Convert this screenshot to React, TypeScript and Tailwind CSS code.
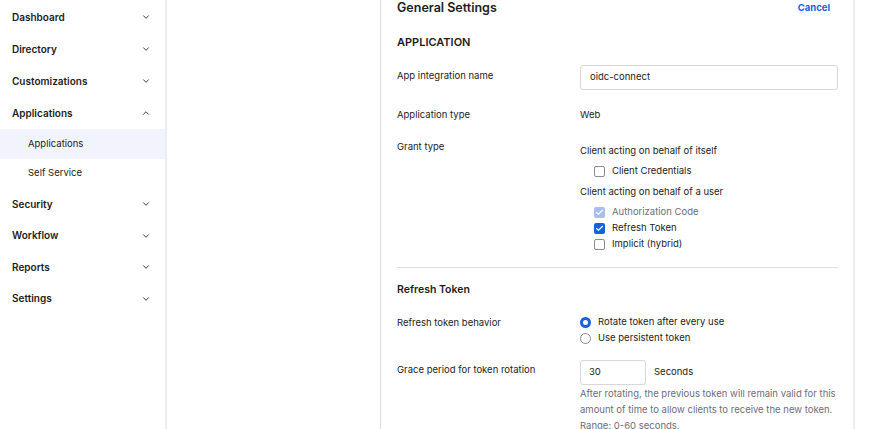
import { ChevronDown, ChevronUp, Check } from 'lucide-react';

const navTop = ['Dashboard', 'Directory', 'Customizations'];
const navBottom = ['Security', 'Workflow', 'Reports', 'Settings'];

function NavRow({ label, open }: { label: string; open?: boolean }) {
    return (
        <div className="flex h-8 items-center justify-between pl-3 pr-[14px] text-[10px] font-semibold text-[#1d1d21]">
            <span>{label}</span>
            {open ? (
                <ChevronUp size={10} strokeWidth={2.25} className="text-[#2f2f36]" />
            ) : (
                <ChevronDown size={10} strokeWidth={2.25} className="text-[#2f2f36]" />
            )}
        </div>
    );
}

function Checkbox({ label, state }: { label: string; state: 'off' | 'on' | 'disabled' }) {
    return (
        <div className="flex h-4 items-center gap-[7px]">
            {state === 'off' ? (
                <span className="h-[11px] w-[11px] rounded-[2px] border border-[#8c8c96] bg-white" />
            ) : (
                <span
                    className={`flex h-[11px] w-[11px] items-center justify-center rounded-[2px] ${state === 'on' ? 'bg-[#1662dd]' : 'bg-[#a9bff0]'}`}
                >
                    <Check size={9} strokeWidth={3} className="text-white" />
                </span>
            )}
            <span className={state === 'disabled' ? 'text-[#6e6e78]' : 'text-[#1d1d21]'}>{label}</span>
        </div>
    );
}

function Radio({ label, checked }: { label: string; checked?: boolean }) {
    return (
        <div className="flex h-4 items-center gap-[7px]">
            {checked ? (
                <span className="h-[11px] w-[11px] rounded-full border-[3px] border-[#1662dd] bg-white" />
            ) : (
                <span className="h-[11px] w-[11px] rounded-full border border-[#8c8c96] bg-white" />
            )}
            <span>{label}</span>
        </div>
    );
}

export default function App() {
    return (
        <div className="flex h-[429px] w-[880px] overflow-hidden bg-white font-['Inter',sans-serif] text-[9.5px] text-[#1d1d21]">
            {/* sidebar */}
            <aside className="w-[167px] shrink-0 border-r-2 border-[#ececef] pt-[1px]">
                {navTop.map((n) => (
                    <NavRow key={n} label={n} />
                ))}
                <NavRow label="Applications" open />
                <div className="flex h-[29.5px] items-center bg-[#f1f4fd] pl-7 text-[9.5px]">Applications</div>
                <div className="flex h-[29.5px] items-center pl-7 text-[9.5px]">Self Service</div>
                {navBottom.map((n) => (
                    <div key={n} className="h-[31.5px]">
                        <NavRow label={n} />
                    </div>
                ))}
            </aside>

            {/* main */}
            <main className="min-w-0 flex-1 pl-[213px] pr-[25px]">
                <div className="h-full border-x border-l-[#dcdcdf] border-r-2 border-r-[#ececef] pl-[16px] pr-[15px]">
                    <div className="flex h-[16px] items-center justify-between">
                        <h2 className="text-[12.5px] font-semibold">General Settings</h2>
                        <button type="button" className="mr-2 text-[9.5px] font-bold text-[#1662dd]">
                            Cancel
                        </button>
                    </div>

                    <h3 className="mt-[18px] text-[11px] font-semibold uppercase">Application</h3>

                    <div className="mt-[14px] flex">
                        <div className="w-[183px] pt-[4px]">App integration name</div>
                        <div className="flex h-[25px] flex-1 items-center rounded-[3px] border border-[#d7d7dc] px-[9px]">
                            oidc-connect
                        </div>
                    </div>

                    <div className="mt-[18px] flex">
                        <div className="w-[183px]">Application type</div>
                        <div>Web</div>
                    </div>

                    <div className="mt-[18px] flex">
                        <div className="w-[183px]">Grant type</div>
                        <div className="flex flex-col pt-[4px]">
                            <div>Client acting on behalf of itself</div>
                            <div className="mt-[5px] pl-[14px]">
                                <Checkbox label="Client Credentials" state="off" />
                            </div>
                            <div className="mt-[6px]">Client acting on behalf of a user</div>
                            <div className="mt-[5px] flex flex-col pl-[14px]">
                                <Checkbox label="Authorization Code" state="disabled" />
                                <Checkbox label="Refresh Token" state="on" />
                                <Checkbox label="Implicit (hybrid)" state="off" />
                            </div>
                        </div>
                    </div>

                    <div className="mt-[15px] border-t border-[#e1e1e4]" />

                    <h3 className="mt-[14px] text-[10.5px] font-semibold">Refresh Token</h3>

                    <div className="mt-[18px] flex">
                        <div className="w-[183px]">Refresh token behavior</div>
                        <div className="-mt-[2px] flex flex-col">
                            <Radio label="Rotate token after every use" checked />
                            <Radio label="Use persistent token" />
                        </div>
                    </div>

                    <div className="mt-[14px] flex">
                        <div className="w-[183px] shrink-0 pt-[3px]">Grace period for token rotation</div>
                        <div className="flex min-w-0 flex-1 flex-col">
                            <div className="flex items-center gap-[8px]">
                                <div className="flex h-[25px] w-[66px] items-center rounded-[3px] border border-[#d7d7dc] px-[8px]">
                                    30
                                </div>
                                <span>Seconds</span>
                            </div>
                            <p className="mt-[1px] w-[262px] shrink-0 leading-[16px] text-[#6e6e78]">
                                After rotating, the previous token will remain valid for this amount of time to allow
                                clients to receive the new token. Range: 0-60 seconds.
                            </p>
                        </div>
                    </div>
                </div>
            </main>
        </div>
    );
}
